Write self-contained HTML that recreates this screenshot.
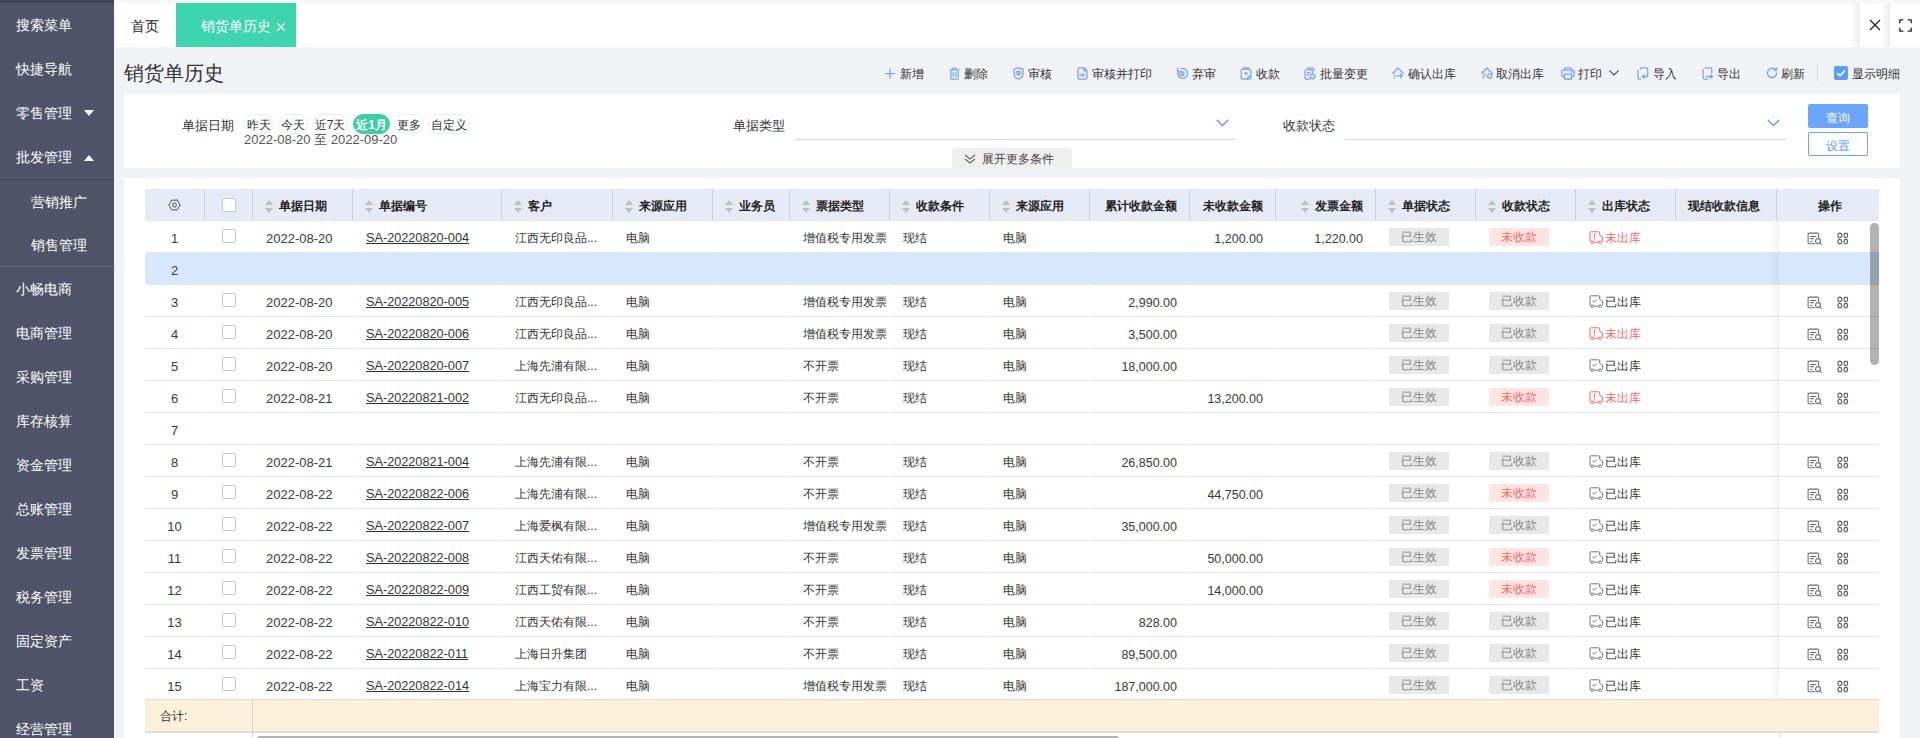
<!DOCTYPE html><html><head><meta charset="utf-8"><title>销货单历史</title><style>
*{box-sizing:border-box;margin:0;padding:0}
html,body{width:1920px;height:738px;overflow:hidden;background:#f0f2f5;font-family:"Liberation Sans",sans-serif;color:#333;font-size:12px}
.abs{position:absolute}
#side{position:absolute;left:0;top:0;width:114px;height:738px;background:#505469;color:#fff}
.mi,.smi,.t,.cell,.hdt{position:absolute;white-space:nowrap;margin-top:1px}
.mi{left:16px;font-size:14px;line-height:16px;color:#fff;font-weight:500}
.smi{left:31px;font-size:14px;line-height:16px;color:#fff;font-weight:500}
.tri{position:absolute;width:0;height:0;border-left:5px solid transparent;border-right:5px solid transparent}
.t{line-height:14px}
.panel{position:absolute;left:124px;width:1776px;background:#fff}
.pill{position:absolute;top:114px;height:20px;border:1px solid #dcf4ec;border-radius:10px;font-size:12px;line-height:20px;text-align:center;color:#333}
.uline{position:absolute;height:1px;background:#d6d6d6}
.vb{position:absolute;width:1px;background:#cdd1da}
.hb{position:absolute;height:1px;background:#e4e4e4}
.cell{font-size:12px;line-height:14px;color:#333;margin-top:0}
.num{margin-top:1px;color:#3a3a3a}
.hdt{font-size:12px;line-height:14px;color:#222;font-weight:bold}
.sort{position:absolute}
.badge{position:absolute;width:60px;height:18px;line-height:18px;text-align:center;font-size:12px}
.bg1{background:#e8e8e8;color:#858585}
.bg2{background:#ffe4e4;color:#f56b5f}
.n13{font-size:13px}
.cb{position:absolute;width:14px;height:14px;border:1px solid #c6c6c6;border-radius:2px;background:#fff}
.lbl{font-size:13px}
</style></head><body>
<div id="side">
<div class="abs" style="left:0;top:0;width:114px;height:3px;background:#41445a"></div>
<div class="mi" style="top:16px">搜索菜单</div>
<div class="mi" style="top:60px">快捷导航</div>
<div class="mi" style="top:104px">零售管理</div>
<div class="mi" style="top:148px">批发管理</div>
<div class="tri" style="left:84px;top:110px;border-top:6px solid #fff"></div>
<div class="tri" style="left:84px;top:155px;border-bottom:6px solid #fff"></div>
<div class="abs" style="left:0;top:179px;width:114px;height:1px;background:#44475a"></div>
<div class="abs" style="left:0;top:266px;width:114px;height:1px;background:#676b7d"></div>
<div class="smi" style="top:193px">营销推广</div>
<div class="smi" style="top:236px">销售管理</div>
<div class="mi" style="top:280px">小畅电商</div>
<div class="mi" style="top:324px">电商管理</div>
<div class="mi" style="top:368px">采购管理</div>
<div class="mi" style="top:412px">库存核算</div>
<div class="mi" style="top:456px">资金管理</div>
<div class="mi" style="top:500px">总账管理</div>
<div class="mi" style="top:544px">发票管理</div>
<div class="mi" style="top:588px">税务管理</div>
<div class="mi" style="top:632px">固定资产</div>
<div class="mi" style="top:676px">工资</div>
<div class="mi" style="top:720px">经营管理</div>
</div>
<div class="abs" style="left:114px;top:0;width:1806px;height:3px;background:#f6f7fb"></div>
<div class="abs" style="left:115px;top:3px;width:1805px;height:44px;background:#fff"></div>
<div class="t" style="left:131px;top:17px;font-size:14px;line-height:16px;color:#222">首页</div>
<div class="abs" style="left:176px;top:3px;width:120px;height:44px;background:#3dd5ae"></div>
<div class="t" style="left:201px;top:17px;font-size:14px;line-height:16px;color:#fff">销货单历史</div>
<svg class="abs" style="left:276px;top:22px" width="10" height="10" viewBox="0 0 10 10"><path d="M1 1L9 9M9 1L1 9" stroke="#fff" stroke-width="1.1"/></svg>
<div class="abs" style="left:1851px;top:3px;width:9px;height:44px;background:linear-gradient(to right,rgba(0,0,0,0),rgba(0,0,0,0.07))"></div>
<div class="abs" style="left:1881px;top:3px;width:9px;height:44px;background:linear-gradient(to right,rgba(0,0,0,0),rgba(0,0,0,0.07))"></div>
<svg class="abs" style="left:1869px;top:19px" width="12" height="12" viewBox="0 0 12 12"><path d="M1 1L11 11M11 1L1 11" stroke="#222" stroke-width="1.3"/></svg>
<svg class="abs" style="left:1899px;top:19px" width="13" height="13" viewBox="0 0 13 13" fill="none" stroke="#222" stroke-width="1.3" stroke-linejoin="round"><path d="M0.8 4.3V0.8H4.3M8.7 0.8H12.2V4.3M12.2 8.7V12.2H8.7M4.3 12.2H0.8V8.7"/></svg>
<div class="t" style="left:124px;top:62px;font-size:20px;line-height:22px;color:#333;margin-top:0">销货单历史</div>
<div class="abs" style="left:884px;top:67px;line-height:0"><svg width="12" height="13" viewBox="0 0 12 13" fill="none" stroke="url(#g1)" stroke-width="1.25" stroke-linecap="round" stroke-linejoin="round"><defs><linearGradient id="g1" x1="0" y1="0" x2="1" y2="1"><stop offset="0" stop-color="#a694f6"/><stop offset="0.45" stop-color="#72a3f8"/><stop offset="1" stop-color="#6aa8f8"/></linearGradient></defs><path d="M6 2V11M1.5 6.5H10.5"/></svg></div>
<div class="t" style="left:900px;top:66px;font-size:12px;line-height:14px;color:#333">新增</div>
<div class="abs" style="left:948.5px;top:67px;line-height:0"><svg width="11" height="13" viewBox="0 0 11 13" fill="none" stroke="url(#g2)" stroke-width="1.25" stroke-linecap="round" stroke-linejoin="round"><defs><linearGradient id="g2" x1="0" y1="0" x2="1" y2="1"><stop offset="0" stop-color="#a694f6"/><stop offset="0.45" stop-color="#72a3f8"/><stop offset="1" stop-color="#6aa8f8"/></linearGradient></defs><path d="M3.8 2.2V1.2H7.2V2.2M1 2.8H10M1.8 3V11C1.8 11.6 2.2 12 2.8 12H8.2C8.8 12 9.2 11.6 9.2 11V3M4.2 5.5V9.5M6.8 5.5V9.5"/></svg></div>
<div class="t" style="left:964px;top:66px;font-size:12px;line-height:14px;color:#333">删除</div>
<div class="abs" style="left:1012.5px;top:67px;line-height:0"><svg width="11" height="13" viewBox="0 0 11 13" fill="none" stroke="url(#g3)" stroke-width="1.25" stroke-linecap="round" stroke-linejoin="round"><defs><linearGradient id="g3" x1="0" y1="0" x2="1" y2="1"><stop offset="0" stop-color="#a694f6"/><stop offset="0.45" stop-color="#72a3f8"/><stop offset="1" stop-color="#6aa8f8"/></linearGradient></defs><path d="M1 2.2L5.5 0.8L10 2.2V6.5C10 9.3 7.8 11.3 5.5 12.2C3.2 11.3 1 9.3 1 6.5Z"/><path d="M3.5 4.5H7.5V7.5H3.5ZM5.5 3.8V9M3.5 6H7.5" stroke-width="0.9"/></svg></div>
<div class="t" style="left:1028px;top:66px;font-size:12px;line-height:14px;color:#333">审核</div>
<div class="abs" style="left:1076.5px;top:67px;line-height:0"><svg width="11" height="13" viewBox="0 0 11 13" fill="none" stroke="url(#g4)" stroke-width="1.25" stroke-linecap="round" stroke-linejoin="round"><defs><linearGradient id="g4" x1="0" y1="0" x2="1" y2="1"><stop offset="0" stop-color="#a694f6"/><stop offset="0.45" stop-color="#72a3f8"/><stop offset="1" stop-color="#6aa8f8"/></linearGradient></defs><path d="M2.2 0.8H7L10 3.8V10.8C10 11.6 9.6 12 8.8 12H2.2C1.4 12 1 11.6 1 10.8V2C1 1.2 1.4 0.8 2.2 0.8ZM7 0.8V3.8H10"/><path d="M2.8 8C3.8 6.4 7.2 6.4 8.2 8C7.2 9.6 3.8 9.6 2.8 8Z M5.5 7.3V8.7" stroke-width="0.9"/></svg></div>
<div class="t" style="left:1092px;top:66px;font-size:12px;line-height:14px;color:#333">审核并打印</div>
<div class="abs" style="left:1176px;top:67px;line-height:0"><svg width="12" height="13" viewBox="0 0 12 13" fill="none" stroke="url(#g5)" stroke-width="1.25" stroke-linecap="round" stroke-linejoin="round"><defs><linearGradient id="g5" x1="0" y1="0" x2="1" y2="1"><stop offset="0" stop-color="#a694f6"/><stop offset="0.45" stop-color="#72a3f8"/><stop offset="1" stop-color="#6aa8f8"/></linearGradient></defs><path d="M2.3 3.8A5 5 0 1 0 5 1.6M1.5 1V4H4.5"/><path d="M4 5H8V8.5H4ZM6 4.3V9.5M4 6.7H8" stroke-width="0.9"/></svg></div>
<div class="t" style="left:1192px;top:66px;font-size:12px;line-height:14px;color:#333">弃审</div>
<div class="abs" style="left:1240px;top:67px;line-height:0"><svg width="12" height="13" viewBox="0 0 12 13" fill="none" stroke="url(#g6)" stroke-width="1.25" stroke-linecap="round" stroke-linejoin="round"><defs><linearGradient id="g6" x1="0" y1="0" x2="1" y2="1"><stop offset="0" stop-color="#a694f6"/><stop offset="0.45" stop-color="#72a3f8"/><stop offset="1" stop-color="#6aa8f8"/></linearGradient></defs><path d="M3 0.8H9M1.2 3.5C1.2 2.8 1.6 2.4 2.3 2.4H9.7C10.4 2.4 10.8 2.8 10.8 3.5V10.8C10.8 11.5 10.4 12 9.7 12H2.3C1.6 12 1.2 11.5 1.2 10.8Z"/><path d="M4 6.3L6 8.3L8 6.3L6 4.8Z" fill="#79a2f8" stroke="none"/><path d="M6.5 12L10.8 8"/></svg></div>
<div class="t" style="left:1256px;top:66px;font-size:12px;line-height:14px;color:#333">收款</div>
<div class="abs" style="left:1304px;top:67px;line-height:0"><svg width="12" height="13" viewBox="0 0 12 13" fill="none" stroke="url(#g7)" stroke-width="1.25" stroke-linecap="round" stroke-linejoin="round"><defs><linearGradient id="g7" x1="0" y1="0" x2="1" y2="1"><stop offset="0" stop-color="#a694f6"/><stop offset="0.45" stop-color="#72a3f8"/><stop offset="1" stop-color="#6aa8f8"/></linearGradient></defs><path d="M3.2 0.8H8.6C9.6 0.8 10 1.2 10 2.2V3.5M1 4C1 3 1.4 2.6 2.4 2.6H7C8 2.6 8.4 3 8.4 4V6M1 4V11C1 11.6 1.4 12 2.2 12H5.5M3 5.5H6M3 7.5H5"/><circle cx="8.5" cy="9.5" r="2.3"/></svg></div>
<div class="t" style="left:1320px;top:66px;font-size:12px;line-height:14px;color:#333">批量变更</div>
<div class="abs" style="left:1392px;top:67px;line-height:0"><svg width="12" height="12" viewBox="0 0 12 12" fill="none" stroke="url(#g8)" stroke-width="1.25" stroke-linecap="round" stroke-linejoin="round"><defs><linearGradient id="g8" x1="0" y1="0" x2="1" y2="1"><stop offset="0" stop-color="#a694f6"/><stop offset="0.45" stop-color="#72a3f8"/><stop offset="1" stop-color="#6aa8f8"/></linearGradient></defs><path d="M0.8 6.2L6 1L11.2 6.2M2.2 5V6.3M2.2 8V8.6M2.2 10.2V11M4.2 8.8H10.2M8.5 7L10.3 8.8L8.5 10.6"/></svg></div>
<div class="t" style="left:1408px;top:66px;font-size:12px;line-height:14px;color:#333">确认出库</div>
<div class="abs" style="left:1480.5px;top:67px;line-height:0"><svg width="12" height="12" viewBox="0 0 12 12" fill="none" stroke="url(#g9)" stroke-width="1.25" stroke-linecap="round" stroke-linejoin="round"><defs><linearGradient id="g9" x1="0" y1="0" x2="1" y2="1"><stop offset="0" stop-color="#a694f6"/><stop offset="0.45" stop-color="#72a3f8"/><stop offset="1" stop-color="#6aa8f8"/></linearGradient></defs><path d="M0.8 6.2L6 1L11.2 6.2M2.2 5V6.3M2.2 8V8.6M2.2 10.2V11M4.2 6.5V7.2M4.2 9V9.7"/><circle cx="8.8" cy="9" r="2.2"/><path d="M7.8 9H9.8" stroke-width="0.9"/></svg></div>
<div class="t" style="left:1496px;top:66px;font-size:12px;line-height:14px;color:#333">取消出库</div>
<div class="abs" style="left:1560.5px;top:67px;line-height:0"><svg width="14" height="13" viewBox="0 0 14 13" fill="none" stroke="url(#g10)" stroke-width="1.3" stroke-linecap="round" stroke-linejoin="round"><defs><linearGradient id="g10" x1="0" y1="0" x2="1" y2="1"><stop offset="0" stop-color="#a694f6"/><stop offset="0.45" stop-color="#72a3f8"/><stop offset="1" stop-color="#6aa8f8"/></linearGradient></defs><path d="M3.5 3.2V1.8C3.5 1.2 3.9 0.8 4.5 0.8H9.5C10.1 0.8 10.5 1.2 10.5 1.8V3.2M3 9.5H1.8C1.2 9.5 0.8 9.1 0.8 8.5V4.3C0.8 3.7 1.2 3.2 1.8 3.2H12.2C12.8 3.2 13.2 3.7 13.2 4.3V8.5C13.2 9.1 12.8 9.5 12.2 9.5H11M3.5 7.2H10.5V12H3.5ZM10.5 5H11.2"/></svg></div>
<div class="t" style="left:1578px;top:66px;font-size:12px;line-height:14px;color:#333">打印</div>
<div class="abs" style="left:1637px;top:67px;line-height:0"><svg width="12" height="13" viewBox="0 0 12 13" fill="none" stroke="url(#g11)" stroke-width="1.25" stroke-linecap="round" stroke-linejoin="round"><defs><linearGradient id="g11" x1="0" y1="0" x2="1" y2="1"><stop offset="0" stop-color="#a694f6"/><stop offset="0.45" stop-color="#72a3f8"/><stop offset="1" stop-color="#6aa8f8"/></linearGradient></defs><path d="M3.2 2.2C3.2 1.2 3.6 0.8 4.6 0.8H9.3C10.3 0.8 10.7 1.2 10.7 2.2V8.8M1 3.2V10.8C1 11.6 1.4 12 2.2 12H4M10.5 9.5H5.5M7.3 7.7L5.5 9.5L7.3 11.3"/></svg></div>
<div class="t" style="left:1653px;top:66px;font-size:12px;line-height:14px;color:#333">导入</div>
<div class="abs" style="left:1701.5px;top:67px;line-height:0"><svg width="12" height="13" viewBox="0 0 12 13" fill="none" stroke="url(#g12)" stroke-width="1.25" stroke-linecap="round" stroke-linejoin="round"><defs><linearGradient id="g12" x1="0" y1="0" x2="1" y2="1"><stop offset="0" stop-color="#a694f6"/><stop offset="0.45" stop-color="#72a3f8"/><stop offset="1" stop-color="#6aa8f8"/></linearGradient></defs><path d="M3 0.8H8.4C9.4 0.8 9.8 1.2 9.8 2.2V5.5M1.2 2.6V10.8C1.2 11.6 1.6 12 2.4 12H5.5M4.5 9.5H10.5M8.7 7.7L10.5 9.5L8.7 11.3"/></svg></div>
<div class="t" style="left:1717px;top:66px;font-size:12px;line-height:14px;color:#333">导出</div>
<div class="abs" style="left:1765.5px;top:67px;line-height:0"><svg width="12" height="12" viewBox="0 0 12 12" fill="none" stroke="url(#g13)" stroke-width="1.4" stroke-linecap="round" stroke-linejoin="round"><defs><linearGradient id="g13" x1="0" y1="0" x2="1" y2="1"><stop offset="0" stop-color="#a694f6"/><stop offset="0.45" stop-color="#72a3f8"/><stop offset="1" stop-color="#6aa8f8"/></linearGradient></defs><path d="M10.6 6.2A4.6 4.6 0 1 1 9 2.4"/><path d="M10.8 0.8V3.4H8.2Z" fill="#72a3f8" stroke-width="0.8"/></svg></div>
<div class="t" style="left:1781px;top:66px;font-size:12px;line-height:14px;color:#333">刷新</div>
<svg class="abs" style="left:1609px;top:70px" width="10" height="6" viewBox="0 0 10 6"><path d="M0.5 0.5L5 5L9.5 0.5" fill="none" stroke="#555" stroke-width="1.1"/></svg>
<div class="abs" style="left:1817px;top:63px;width:1px;height:20px;background:#dcdcdc"></div>
<div class="abs" style="left:1834px;top:66px;width:14px;height:14px;border-radius:2px;background:#5e9df6"></div>
<svg class="abs" style="left:1834px;top:66px" width="14" height="14" viewBox="0 0 14 14"><path d="M3.2 7.1L6 9.7L10.9 4.6" fill="none" stroke="#fff" stroke-width="1.6"/></svg>
<div class="t" style="left:1852px;top:66px;font-size:12px;line-height:14px;color:#333">显示明细</div>
<div class="panel" style="top:94px;height:74px"></div>
<div class="t lbl" style="left:182px;top:118px">单据日期</div>
<div class="pill" style="left:244px;width:30px">昨天</div>
<div class="pill" style="left:278px;width:30px">今天</div>
<div class="pill" style="left:312px;width:36px">近7天</div>
<div class="pill" style="left:353px;width:37px;background:#3ccfa6;border-color:#3ccfa6;color:#fff;font-weight:bold">近1月</div>
<div class="pill" style="left:394px;width:30px">更多</div>
<div class="pill" style="left:428px;width:42px">自定义</div>
<div class="t n13" style="left:244px;top:132px;color:#555">2022-08-20 至 2022-09-20</div>
<div class="t lbl" style="left:733px;top:118px">单据类型</div>
<div class="uline" style="left:795px;top:139px;width:440px"></div>
<svg class="abs" style="left:1216px;top:118.5px" width="13" height="8" viewBox="0 0 13 8"><path d="M0.7 0.7L6.5 6.5L12.3 0.7" fill="none" stroke="#5b9cf6" stroke-width="1.3"/></svg>
<div class="t lbl" style="left:1283px;top:118px">收款状态</div>
<div class="uline" style="left:1345px;top:139px;width:441px"></div>
<svg class="abs" style="left:1767px;top:118.5px" width="13" height="8" viewBox="0 0 13 8"><path d="M0.7 0.7L6.5 6.5L12.3 0.7" fill="none" stroke="#5b9cf6" stroke-width="1.3"/></svg>
<div class="abs" style="left:1808px;top:104px;width:60px;height:24px;background:#6aa5f7;border-radius:2px"></div>
<div class="t" style="left:1826px;top:110px;color:#fff">查询</div>
<div class="abs" style="left:1808px;top:132px;width:60px;height:24px;background:#fff;border:1px solid #6aa5f7;border-radius:2px"></div>
<div class="t" style="left:1826px;top:138px;color:#5b9cf6">设置</div>
<div class="abs" style="left:952px;top:148px;width:120px;height:20px;background:#efefef;border-radius:4px 4px 0 0"></div>
<svg class="abs" style="left:964px;top:153.5px" width="12" height="10" viewBox="0 0 12 10"><path d="M1 1L6 5L11 1M1 5L6 9L11 5" fill="none" stroke="#666" stroke-width="1.1"/></svg>
<div class="t" style="left:982px;top:151px;color:#444">展开更多条件</div>
<div class="panel" style="top:178px;height:560px"></div>
<div class="abs" style="left:145px;top:189px;width:1734px;height:32px;background:#e6eaf4"></div>
<svg class="sort" style="left:265px;top:200px" width="8" height="13" viewBox="0 0 8 13"><path d="M4 0L8 5H0Z M0 8H8L4 13Z" fill="#bfbfbf"/></svg>
<div class="hdt" style="left:279px;top:198px">单据日期</div>
<svg class="sort" style="left:365px;top:200px" width="8" height="13" viewBox="0 0 8 13"><path d="M4 0L8 5H0Z M0 8H8L4 13Z" fill="#bfbfbf"/></svg>
<div class="hdt" style="left:379px;top:198px">单据编号</div>
<svg class="sort" style="left:514px;top:200px" width="8" height="13" viewBox="0 0 8 13"><path d="M4 0L8 5H0Z M0 8H8L4 13Z" fill="#bfbfbf"/></svg>
<div class="hdt" style="left:528px;top:198px">客户</div>
<svg class="sort" style="left:625px;top:200px" width="8" height="13" viewBox="0 0 8 13"><path d="M4 0L8 5H0Z M0 8H8L4 13Z" fill="#bfbfbf"/></svg>
<div class="hdt" style="left:639px;top:198px">来源应用</div>
<svg class="sort" style="left:725px;top:200px" width="8" height="13" viewBox="0 0 8 13"><path d="M4 0L8 5H0Z M0 8H8L4 13Z" fill="#bfbfbf"/></svg>
<div class="hdt" style="left:739px;top:198px">业务员</div>
<svg class="sort" style="left:802px;top:200px" width="8" height="13" viewBox="0 0 8 13"><path d="M4 0L8 5H0Z M0 8H8L4 13Z" fill="#bfbfbf"/></svg>
<div class="hdt" style="left:816px;top:198px">票据类型</div>
<svg class="sort" style="left:902px;top:200px" width="8" height="13" viewBox="0 0 8 13"><path d="M4 0L8 5H0Z M0 8H8L4 13Z" fill="#bfbfbf"/></svg>
<div class="hdt" style="left:916px;top:198px">收款条件</div>
<svg class="sort" style="left:1002px;top:200px" width="8" height="13" viewBox="0 0 8 13"><path d="M4 0L8 5H0Z M0 8H8L4 13Z" fill="#bfbfbf"/></svg>
<div class="hdt" style="left:1016px;top:198px">来源应用</div>
<svg class="sort" style="left:1388px;top:200px" width="8" height="13" viewBox="0 0 8 13"><path d="M4 0L8 5H0Z M0 8H8L4 13Z" fill="#bfbfbf"/></svg>
<div class="hdt" style="left:1402px;top:198px">单据状态</div>
<svg class="sort" style="left:1488px;top:200px" width="8" height="13" viewBox="0 0 8 13"><path d="M4 0L8 5H0Z M0 8H8L4 13Z" fill="#bfbfbf"/></svg>
<div class="hdt" style="left:1502px;top:198px">收款状态</div>
<svg class="sort" style="left:1588px;top:200px" width="8" height="13" viewBox="0 0 8 13"><path d="M4 0L8 5H0Z M0 8H8L4 13Z" fill="#bfbfbf"/></svg>
<div class="hdt" style="left:1602px;top:198px">出库状态</div>
<div class="hdt" style="left:1105px;top:198px">累计收款金额</div>
<div class="hdt" style="left:1203px;top:198px">未收款金额</div>
<svg class="sort" style="left:1301px;top:200px" width="8" height="13" viewBox="0 0 8 13"><path d="M4 0L8 5H0Z M0 8H8L4 13Z" fill="#bfbfbf"/></svg>
<div class="hdt" style="left:1315px;top:198px">发票金额</div>
<div class="hdt" style="left:1688px;top:198px">现结收款信息</div>
<div class="hdt" style="left:1818px;top:198px">操作</div>
<svg class="abs" style="left:168px;top:199.2px" width="13" height="12" viewBox="0 0 13 12" fill="none" stroke="#4a4a4a" stroke-width="1"><path d="M10.48 3.70Q13.70 6.00 10.48 8.30Q10.10 12.24 6.50 10.60Q2.90 12.24 2.52 8.30Q-0.70 6.00 2.52 3.70Q2.90 -0.24 6.50 1.40Q10.10 -0.24 10.48 3.70Z"/><ellipse cx="6.5" cy="6" rx="1.8" ry="2.2"/></svg>
<div class="cb" style="left:222px;top:198px"></div>
<div class="vb" style="left:204px;top:189px;height:32px"></div>
<div class="vb" style="left:252px;top:189px;height:32px"></div>
<div class="vb" style="left:352px;top:189px;height:32px"></div>
<div class="vb" style="left:501px;top:189px;height:32px"></div>
<div class="vb" style="left:612px;top:189px;height:32px"></div>
<div class="vb" style="left:712px;top:189px;height:32px"></div>
<div class="vb" style="left:789px;top:189px;height:32px"></div>
<div class="vb" style="left:889px;top:189px;height:32px"></div>
<div class="vb" style="left:989px;top:189px;height:32px"></div>
<div class="vb" style="left:1089px;top:189px;height:32px"></div>
<div class="vb" style="left:1189px;top:189px;height:32px"></div>
<div class="vb" style="left:1275px;top:189px;height:32px"></div>
<div class="vb" style="left:1375px;top:189px;height:32px"></div>
<div class="vb" style="left:1475px;top:189px;height:32px"></div>
<div class="vb" style="left:1575px;top:189px;height:32px"></div>
<div class="vb" style="left:1675px;top:189px;height:32px"></div>
<div class="vb" style="left:1776px;top:189px;height:32px"></div>
<div class="hb" style="left:146px;top:252px;width:58px"></div>
<div class="hb" style="left:205px;top:252px;width:47px"></div>
<div class="hb" style="left:253px;top:252px;width:99px"></div>
<div class="hb" style="left:353px;top:252px;width:148px"></div>
<div class="hb" style="left:502px;top:252px;width:110px"></div>
<div class="hb" style="left:613px;top:252px;width:99px"></div>
<div class="hb" style="left:713px;top:252px;width:76px"></div>
<div class="hb" style="left:790px;top:252px;width:99px"></div>
<div class="hb" style="left:890px;top:252px;width:99px"></div>
<div class="hb" style="left:990px;top:252px;width:99px"></div>
<div class="hb" style="left:1090px;top:252px;width:99px"></div>
<div class="hb" style="left:1190px;top:252px;width:85px"></div>
<div class="hb" style="left:1276px;top:252px;width:99px"></div>
<div class="hb" style="left:1376px;top:252px;width:99px"></div>
<div class="hb" style="left:1476px;top:252px;width:99px"></div>
<div class="hb" style="left:1576px;top:252px;width:99px"></div>
<div class="hb" style="left:1676px;top:252px;width:100px"></div>
<div class="hb" style="left:1777px;top:252px;width:102px"></div>
<div class="cell n13 num" style="left:145px;width:59px;text-align:center;top:231px">1</div>
<div class="cb" style="left:222px;top:229px"></div>
<div class="cell n13 num" style="left:266px;top:231px">2022-08-20</div>
<div class="cell" style="left:366px;top:231px;text-decoration:underline;font-size:12.7px">SA-20220820-004</div>
<div class="cell" style="left:515px;top:231px">江西无印良品...</div>
<div class="cell" style="left:626px;top:231px">电脑</div>
<div class="cell" style="left:803px;top:231px">增值税专用发票</div>
<div class="cell" style="left:903px;top:231px">现结</div>
<div class="cell" style="left:1003px;top:231px">电脑</div>
<div class="cell num" style="right:657px;top:231px;font-size:12.5px">1,200.00</div>
<div class="cell num" style="right:557px;top:231px;font-size:12.5px">1,220.00</div>
<div class="badge bg1" style="left:1389px;top:228px">已生效</div>
<div class="badge bg2" style="left:1489px;top:228px">未收款</div>
<div class="abs" style="left:1589px;top:230.5px;line-height:0"><svg width="16" height="14" viewBox="0 0 16 14" fill="none" stroke="#f7695c" stroke-width="1" stroke-linejoin="round"><path d="M1 10.5V1.8C1 1.2 1.3 0.8 2 0.8H9.8C10.4 0.8 10.7 1.2 10.7 1.8V4.2L13.6 6.2V10.5M4.8 11.2H9.6M5.6 3V7M5.6 8.2V9"/><circle cx="3.2" cy="11.2" r="1.35"/><circle cx="11.2" cy="11.2" r="1.35"/></svg></div>
<div class="cell" style="left:1605px;top:231px;color:#f7695c">未出库</div>
<div class="abs" style="left:1807px;top:232px;line-height:0"><svg width="16" height="14" viewBox="0 0 16 14" fill="none" stroke="#6e6e6e" stroke-width="1.05" stroke-linecap="round"><path d="M7.6 11.8H2.2C1.6 11.8 1.1 11.3 1.1 10.7V2.2C1.1 1.6 1.6 1.1 2.2 1.1H10.6C11.2 1.1 11.7 1.6 11.7 2.2V5.6M3.6 4.5H9M3.6 6.6H6.4M3.6 9.4H5"/><circle cx="11" cy="9.1" r="2.5"/><path d="M12.9 11L14.4 12.6"/></svg></div>
<div class="abs" style="left:1837px;top:232px;line-height:0"><svg width="12" height="13" viewBox="0 0 12 13" fill="none" stroke="#5c5c5c" stroke-width="1.2"><rect x="1" y="1.2" width="3.6" height="4.4" rx="1.8"/><rect x="7" y="1.2" width="3.6" height="4.4" rx="1.8"/><rect x="1" y="7.4" width="3.6" height="4.4" rx="1.8"/><rect x="7" y="7.4" width="3.6" height="4.4" rx="1.8"/></svg></div>
<div class="abs" style="left:145px;top:253px;width:1734px;height:31px;background:#d7e7fc"></div>
<div class="hb" style="left:146px;top:284px;width:58px"></div>
<div class="hb" style="left:205px;top:284px;width:47px"></div>
<div class="hb" style="left:253px;top:284px;width:99px"></div>
<div class="hb" style="left:353px;top:284px;width:148px"></div>
<div class="hb" style="left:502px;top:284px;width:110px"></div>
<div class="hb" style="left:613px;top:284px;width:99px"></div>
<div class="hb" style="left:713px;top:284px;width:76px"></div>
<div class="hb" style="left:790px;top:284px;width:99px"></div>
<div class="hb" style="left:890px;top:284px;width:99px"></div>
<div class="hb" style="left:990px;top:284px;width:99px"></div>
<div class="hb" style="left:1090px;top:284px;width:99px"></div>
<div class="hb" style="left:1190px;top:284px;width:85px"></div>
<div class="hb" style="left:1276px;top:284px;width:99px"></div>
<div class="hb" style="left:1376px;top:284px;width:99px"></div>
<div class="hb" style="left:1476px;top:284px;width:99px"></div>
<div class="hb" style="left:1576px;top:284px;width:99px"></div>
<div class="hb" style="left:1676px;top:284px;width:100px"></div>
<div class="hb" style="left:1777px;top:284px;width:102px"></div>
<div class="cell n13 num" style="left:145px;width:59px;text-align:center;top:263px">2</div>
<div class="hb" style="left:146px;top:316px;width:58px"></div>
<div class="hb" style="left:205px;top:316px;width:47px"></div>
<div class="hb" style="left:253px;top:316px;width:99px"></div>
<div class="hb" style="left:353px;top:316px;width:148px"></div>
<div class="hb" style="left:502px;top:316px;width:110px"></div>
<div class="hb" style="left:613px;top:316px;width:99px"></div>
<div class="hb" style="left:713px;top:316px;width:76px"></div>
<div class="hb" style="left:790px;top:316px;width:99px"></div>
<div class="hb" style="left:890px;top:316px;width:99px"></div>
<div class="hb" style="left:990px;top:316px;width:99px"></div>
<div class="hb" style="left:1090px;top:316px;width:99px"></div>
<div class="hb" style="left:1190px;top:316px;width:85px"></div>
<div class="hb" style="left:1276px;top:316px;width:99px"></div>
<div class="hb" style="left:1376px;top:316px;width:99px"></div>
<div class="hb" style="left:1476px;top:316px;width:99px"></div>
<div class="hb" style="left:1576px;top:316px;width:99px"></div>
<div class="hb" style="left:1676px;top:316px;width:100px"></div>
<div class="hb" style="left:1777px;top:316px;width:102px"></div>
<div class="cell n13 num" style="left:145px;width:59px;text-align:center;top:295px">3</div>
<div class="cb" style="left:222px;top:293px"></div>
<div class="cell n13 num" style="left:266px;top:295px">2022-08-20</div>
<div class="cell" style="left:366px;top:295px;text-decoration:underline;font-size:12.7px">SA-20220820-005</div>
<div class="cell" style="left:515px;top:295px">江西无印良品...</div>
<div class="cell" style="left:626px;top:295px">电脑</div>
<div class="cell" style="left:803px;top:295px">增值税专用发票</div>
<div class="cell" style="left:903px;top:295px">现结</div>
<div class="cell" style="left:1003px;top:295px">电脑</div>
<div class="cell num" style="right:743px;top:295px;font-size:12.5px">2,990.00</div>
<div class="badge bg1" style="left:1389px;top:292px">已生效</div>
<div class="badge bg1" style="left:1489px;top:292px">已收款</div>
<div class="abs" style="left:1589px;top:294.5px;line-height:0"><svg width="16" height="14" viewBox="0 0 16 14" fill="none" stroke="#777" stroke-width="1" stroke-linejoin="round"><path d="M1 10.5V1.8C1 1.2 1.3 0.8 2 0.8H9.8C10.4 0.8 10.7 1.2 10.7 1.8V4.2L13.6 6.2V10.5M4.8 11.2H9.6M3.6 5.6L5.2 7.2L7.6 4.6"/><circle cx="3.2" cy="11.2" r="1.35"/><circle cx="11.2" cy="11.2" r="1.35"/></svg></div>
<div class="cell" style="left:1605px;top:295px;color:#333">已出库</div>
<div class="abs" style="left:1807px;top:296px;line-height:0"><svg width="16" height="14" viewBox="0 0 16 14" fill="none" stroke="#6e6e6e" stroke-width="1.05" stroke-linecap="round"><path d="M7.6 11.8H2.2C1.6 11.8 1.1 11.3 1.1 10.7V2.2C1.1 1.6 1.6 1.1 2.2 1.1H10.6C11.2 1.1 11.7 1.6 11.7 2.2V5.6M3.6 4.5H9M3.6 6.6H6.4M3.6 9.4H5"/><circle cx="11" cy="9.1" r="2.5"/><path d="M12.9 11L14.4 12.6"/></svg></div>
<div class="abs" style="left:1837px;top:296px;line-height:0"><svg width="12" height="13" viewBox="0 0 12 13" fill="none" stroke="#5c5c5c" stroke-width="1.2"><rect x="1" y="1.2" width="3.6" height="4.4" rx="1.8"/><rect x="7" y="1.2" width="3.6" height="4.4" rx="1.8"/><rect x="1" y="7.4" width="3.6" height="4.4" rx="1.8"/><rect x="7" y="7.4" width="3.6" height="4.4" rx="1.8"/></svg></div>
<div class="hb" style="left:146px;top:348px;width:58px"></div>
<div class="hb" style="left:205px;top:348px;width:47px"></div>
<div class="hb" style="left:253px;top:348px;width:99px"></div>
<div class="hb" style="left:353px;top:348px;width:148px"></div>
<div class="hb" style="left:502px;top:348px;width:110px"></div>
<div class="hb" style="left:613px;top:348px;width:99px"></div>
<div class="hb" style="left:713px;top:348px;width:76px"></div>
<div class="hb" style="left:790px;top:348px;width:99px"></div>
<div class="hb" style="left:890px;top:348px;width:99px"></div>
<div class="hb" style="left:990px;top:348px;width:99px"></div>
<div class="hb" style="left:1090px;top:348px;width:99px"></div>
<div class="hb" style="left:1190px;top:348px;width:85px"></div>
<div class="hb" style="left:1276px;top:348px;width:99px"></div>
<div class="hb" style="left:1376px;top:348px;width:99px"></div>
<div class="hb" style="left:1476px;top:348px;width:99px"></div>
<div class="hb" style="left:1576px;top:348px;width:99px"></div>
<div class="hb" style="left:1676px;top:348px;width:100px"></div>
<div class="hb" style="left:1777px;top:348px;width:102px"></div>
<div class="cell n13 num" style="left:145px;width:59px;text-align:center;top:327px">4</div>
<div class="cb" style="left:222px;top:325px"></div>
<div class="cell n13 num" style="left:266px;top:327px">2022-08-20</div>
<div class="cell" style="left:366px;top:327px;text-decoration:underline;font-size:12.7px">SA-20220820-006</div>
<div class="cell" style="left:515px;top:327px">江西无印良品...</div>
<div class="cell" style="left:626px;top:327px">电脑</div>
<div class="cell" style="left:803px;top:327px">增值税专用发票</div>
<div class="cell" style="left:903px;top:327px">现结</div>
<div class="cell" style="left:1003px;top:327px">电脑</div>
<div class="cell num" style="right:743px;top:327px;font-size:12.5px">3,500.00</div>
<div class="badge bg1" style="left:1389px;top:324px">已生效</div>
<div class="badge bg1" style="left:1489px;top:324px">已收款</div>
<div class="abs" style="left:1589px;top:326.5px;line-height:0"><svg width="16" height="14" viewBox="0 0 16 14" fill="none" stroke="#f7695c" stroke-width="1" stroke-linejoin="round"><path d="M1 10.5V1.8C1 1.2 1.3 0.8 2 0.8H9.8C10.4 0.8 10.7 1.2 10.7 1.8V4.2L13.6 6.2V10.5M4.8 11.2H9.6M5.6 3V7M5.6 8.2V9"/><circle cx="3.2" cy="11.2" r="1.35"/><circle cx="11.2" cy="11.2" r="1.35"/></svg></div>
<div class="cell" style="left:1605px;top:327px;color:#f7695c">未出库</div>
<div class="abs" style="left:1807px;top:328px;line-height:0"><svg width="16" height="14" viewBox="0 0 16 14" fill="none" stroke="#6e6e6e" stroke-width="1.05" stroke-linecap="round"><path d="M7.6 11.8H2.2C1.6 11.8 1.1 11.3 1.1 10.7V2.2C1.1 1.6 1.6 1.1 2.2 1.1H10.6C11.2 1.1 11.7 1.6 11.7 2.2V5.6M3.6 4.5H9M3.6 6.6H6.4M3.6 9.4H5"/><circle cx="11" cy="9.1" r="2.5"/><path d="M12.9 11L14.4 12.6"/></svg></div>
<div class="abs" style="left:1837px;top:328px;line-height:0"><svg width="12" height="13" viewBox="0 0 12 13" fill="none" stroke="#5c5c5c" stroke-width="1.2"><rect x="1" y="1.2" width="3.6" height="4.4" rx="1.8"/><rect x="7" y="1.2" width="3.6" height="4.4" rx="1.8"/><rect x="1" y="7.4" width="3.6" height="4.4" rx="1.8"/><rect x="7" y="7.4" width="3.6" height="4.4" rx="1.8"/></svg></div>
<div class="hb" style="left:146px;top:380px;width:58px"></div>
<div class="hb" style="left:205px;top:380px;width:47px"></div>
<div class="hb" style="left:253px;top:380px;width:99px"></div>
<div class="hb" style="left:353px;top:380px;width:148px"></div>
<div class="hb" style="left:502px;top:380px;width:110px"></div>
<div class="hb" style="left:613px;top:380px;width:99px"></div>
<div class="hb" style="left:713px;top:380px;width:76px"></div>
<div class="hb" style="left:790px;top:380px;width:99px"></div>
<div class="hb" style="left:890px;top:380px;width:99px"></div>
<div class="hb" style="left:990px;top:380px;width:99px"></div>
<div class="hb" style="left:1090px;top:380px;width:99px"></div>
<div class="hb" style="left:1190px;top:380px;width:85px"></div>
<div class="hb" style="left:1276px;top:380px;width:99px"></div>
<div class="hb" style="left:1376px;top:380px;width:99px"></div>
<div class="hb" style="left:1476px;top:380px;width:99px"></div>
<div class="hb" style="left:1576px;top:380px;width:99px"></div>
<div class="hb" style="left:1676px;top:380px;width:100px"></div>
<div class="hb" style="left:1777px;top:380px;width:102px"></div>
<div class="cell n13 num" style="left:145px;width:59px;text-align:center;top:359px">5</div>
<div class="cb" style="left:222px;top:357px"></div>
<div class="cell n13 num" style="left:266px;top:359px">2022-08-20</div>
<div class="cell" style="left:366px;top:359px;text-decoration:underline;font-size:12.7px">SA-20220820-007</div>
<div class="cell" style="left:515px;top:359px">上海先浦有限...</div>
<div class="cell" style="left:626px;top:359px">电脑</div>
<div class="cell" style="left:803px;top:359px">不开票</div>
<div class="cell" style="left:903px;top:359px">现结</div>
<div class="cell" style="left:1003px;top:359px">电脑</div>
<div class="cell num" style="right:743px;top:359px;font-size:12.5px">18,000.00</div>
<div class="badge bg1" style="left:1389px;top:356px">已生效</div>
<div class="badge bg1" style="left:1489px;top:356px">已收款</div>
<div class="abs" style="left:1589px;top:358.5px;line-height:0"><svg width="16" height="14" viewBox="0 0 16 14" fill="none" stroke="#777" stroke-width="1" stroke-linejoin="round"><path d="M1 10.5V1.8C1 1.2 1.3 0.8 2 0.8H9.8C10.4 0.8 10.7 1.2 10.7 1.8V4.2L13.6 6.2V10.5M4.8 11.2H9.6M3.6 5.6L5.2 7.2L7.6 4.6"/><circle cx="3.2" cy="11.2" r="1.35"/><circle cx="11.2" cy="11.2" r="1.35"/></svg></div>
<div class="cell" style="left:1605px;top:359px;color:#333">已出库</div>
<div class="abs" style="left:1807px;top:360px;line-height:0"><svg width="16" height="14" viewBox="0 0 16 14" fill="none" stroke="#6e6e6e" stroke-width="1.05" stroke-linecap="round"><path d="M7.6 11.8H2.2C1.6 11.8 1.1 11.3 1.1 10.7V2.2C1.1 1.6 1.6 1.1 2.2 1.1H10.6C11.2 1.1 11.7 1.6 11.7 2.2V5.6M3.6 4.5H9M3.6 6.6H6.4M3.6 9.4H5"/><circle cx="11" cy="9.1" r="2.5"/><path d="M12.9 11L14.4 12.6"/></svg></div>
<div class="abs" style="left:1837px;top:360px;line-height:0"><svg width="12" height="13" viewBox="0 0 12 13" fill="none" stroke="#5c5c5c" stroke-width="1.2"><rect x="1" y="1.2" width="3.6" height="4.4" rx="1.8"/><rect x="7" y="1.2" width="3.6" height="4.4" rx="1.8"/><rect x="1" y="7.4" width="3.6" height="4.4" rx="1.8"/><rect x="7" y="7.4" width="3.6" height="4.4" rx="1.8"/></svg></div>
<div class="hb" style="left:146px;top:412px;width:58px"></div>
<div class="hb" style="left:205px;top:412px;width:47px"></div>
<div class="hb" style="left:253px;top:412px;width:99px"></div>
<div class="hb" style="left:353px;top:412px;width:148px"></div>
<div class="hb" style="left:502px;top:412px;width:110px"></div>
<div class="hb" style="left:613px;top:412px;width:99px"></div>
<div class="hb" style="left:713px;top:412px;width:76px"></div>
<div class="hb" style="left:790px;top:412px;width:99px"></div>
<div class="hb" style="left:890px;top:412px;width:99px"></div>
<div class="hb" style="left:990px;top:412px;width:99px"></div>
<div class="hb" style="left:1090px;top:412px;width:99px"></div>
<div class="hb" style="left:1190px;top:412px;width:85px"></div>
<div class="hb" style="left:1276px;top:412px;width:99px"></div>
<div class="hb" style="left:1376px;top:412px;width:99px"></div>
<div class="hb" style="left:1476px;top:412px;width:99px"></div>
<div class="hb" style="left:1576px;top:412px;width:99px"></div>
<div class="hb" style="left:1676px;top:412px;width:100px"></div>
<div class="hb" style="left:1777px;top:412px;width:102px"></div>
<div class="cell n13 num" style="left:145px;width:59px;text-align:center;top:391px">6</div>
<div class="cb" style="left:222px;top:389px"></div>
<div class="cell n13 num" style="left:266px;top:391px">2022-08-21</div>
<div class="cell" style="left:366px;top:391px;text-decoration:underline;font-size:12.7px">SA-20220821-002</div>
<div class="cell" style="left:515px;top:391px">江西无印良品...</div>
<div class="cell" style="left:626px;top:391px">电脑</div>
<div class="cell" style="left:803px;top:391px">不开票</div>
<div class="cell" style="left:903px;top:391px">现结</div>
<div class="cell" style="left:1003px;top:391px">电脑</div>
<div class="cell num" style="right:657px;top:391px;font-size:12.5px">13,200.00</div>
<div class="badge bg1" style="left:1389px;top:388px">已生效</div>
<div class="badge bg2" style="left:1489px;top:388px">未收款</div>
<div class="abs" style="left:1589px;top:390.5px;line-height:0"><svg width="16" height="14" viewBox="0 0 16 14" fill="none" stroke="#f7695c" stroke-width="1" stroke-linejoin="round"><path d="M1 10.5V1.8C1 1.2 1.3 0.8 2 0.8H9.8C10.4 0.8 10.7 1.2 10.7 1.8V4.2L13.6 6.2V10.5M4.8 11.2H9.6M5.6 3V7M5.6 8.2V9"/><circle cx="3.2" cy="11.2" r="1.35"/><circle cx="11.2" cy="11.2" r="1.35"/></svg></div>
<div class="cell" style="left:1605px;top:391px;color:#f7695c">未出库</div>
<div class="abs" style="left:1807px;top:392px;line-height:0"><svg width="16" height="14" viewBox="0 0 16 14" fill="none" stroke="#6e6e6e" stroke-width="1.05" stroke-linecap="round"><path d="M7.6 11.8H2.2C1.6 11.8 1.1 11.3 1.1 10.7V2.2C1.1 1.6 1.6 1.1 2.2 1.1H10.6C11.2 1.1 11.7 1.6 11.7 2.2V5.6M3.6 4.5H9M3.6 6.6H6.4M3.6 9.4H5"/><circle cx="11" cy="9.1" r="2.5"/><path d="M12.9 11L14.4 12.6"/></svg></div>
<div class="abs" style="left:1837px;top:392px;line-height:0"><svg width="12" height="13" viewBox="0 0 12 13" fill="none" stroke="#5c5c5c" stroke-width="1.2"><rect x="1" y="1.2" width="3.6" height="4.4" rx="1.8"/><rect x="7" y="1.2" width="3.6" height="4.4" rx="1.8"/><rect x="1" y="7.4" width="3.6" height="4.4" rx="1.8"/><rect x="7" y="7.4" width="3.6" height="4.4" rx="1.8"/></svg></div>
<div class="hb" style="left:146px;top:444px;width:58px"></div>
<div class="hb" style="left:205px;top:444px;width:47px"></div>
<div class="hb" style="left:253px;top:444px;width:99px"></div>
<div class="hb" style="left:353px;top:444px;width:148px"></div>
<div class="hb" style="left:502px;top:444px;width:110px"></div>
<div class="hb" style="left:613px;top:444px;width:99px"></div>
<div class="hb" style="left:713px;top:444px;width:76px"></div>
<div class="hb" style="left:790px;top:444px;width:99px"></div>
<div class="hb" style="left:890px;top:444px;width:99px"></div>
<div class="hb" style="left:990px;top:444px;width:99px"></div>
<div class="hb" style="left:1090px;top:444px;width:99px"></div>
<div class="hb" style="left:1190px;top:444px;width:85px"></div>
<div class="hb" style="left:1276px;top:444px;width:99px"></div>
<div class="hb" style="left:1376px;top:444px;width:99px"></div>
<div class="hb" style="left:1476px;top:444px;width:99px"></div>
<div class="hb" style="left:1576px;top:444px;width:99px"></div>
<div class="hb" style="left:1676px;top:444px;width:100px"></div>
<div class="hb" style="left:1777px;top:444px;width:102px"></div>
<div class="cell n13 num" style="left:145px;width:59px;text-align:center;top:423px">7</div>
<div class="hb" style="left:146px;top:476px;width:58px"></div>
<div class="hb" style="left:205px;top:476px;width:47px"></div>
<div class="hb" style="left:253px;top:476px;width:99px"></div>
<div class="hb" style="left:353px;top:476px;width:148px"></div>
<div class="hb" style="left:502px;top:476px;width:110px"></div>
<div class="hb" style="left:613px;top:476px;width:99px"></div>
<div class="hb" style="left:713px;top:476px;width:76px"></div>
<div class="hb" style="left:790px;top:476px;width:99px"></div>
<div class="hb" style="left:890px;top:476px;width:99px"></div>
<div class="hb" style="left:990px;top:476px;width:99px"></div>
<div class="hb" style="left:1090px;top:476px;width:99px"></div>
<div class="hb" style="left:1190px;top:476px;width:85px"></div>
<div class="hb" style="left:1276px;top:476px;width:99px"></div>
<div class="hb" style="left:1376px;top:476px;width:99px"></div>
<div class="hb" style="left:1476px;top:476px;width:99px"></div>
<div class="hb" style="left:1576px;top:476px;width:99px"></div>
<div class="hb" style="left:1676px;top:476px;width:100px"></div>
<div class="hb" style="left:1777px;top:476px;width:102px"></div>
<div class="cell n13 num" style="left:145px;width:59px;text-align:center;top:455px">8</div>
<div class="cb" style="left:222px;top:453px"></div>
<div class="cell n13 num" style="left:266px;top:455px">2022-08-21</div>
<div class="cell" style="left:366px;top:455px;text-decoration:underline;font-size:12.7px">SA-20220821-004</div>
<div class="cell" style="left:515px;top:455px">上海先浦有限...</div>
<div class="cell" style="left:626px;top:455px">电脑</div>
<div class="cell" style="left:803px;top:455px">不开票</div>
<div class="cell" style="left:903px;top:455px">现结</div>
<div class="cell" style="left:1003px;top:455px">电脑</div>
<div class="cell num" style="right:743px;top:455px;font-size:12.5px">26,850.00</div>
<div class="badge bg1" style="left:1389px;top:452px">已生效</div>
<div class="badge bg1" style="left:1489px;top:452px">已收款</div>
<div class="abs" style="left:1589px;top:454.5px;line-height:0"><svg width="16" height="14" viewBox="0 0 16 14" fill="none" stroke="#777" stroke-width="1" stroke-linejoin="round"><path d="M1 10.5V1.8C1 1.2 1.3 0.8 2 0.8H9.8C10.4 0.8 10.7 1.2 10.7 1.8V4.2L13.6 6.2V10.5M4.8 11.2H9.6M3.6 5.6L5.2 7.2L7.6 4.6"/><circle cx="3.2" cy="11.2" r="1.35"/><circle cx="11.2" cy="11.2" r="1.35"/></svg></div>
<div class="cell" style="left:1605px;top:455px;color:#333">已出库</div>
<div class="abs" style="left:1807px;top:456px;line-height:0"><svg width="16" height="14" viewBox="0 0 16 14" fill="none" stroke="#6e6e6e" stroke-width="1.05" stroke-linecap="round"><path d="M7.6 11.8H2.2C1.6 11.8 1.1 11.3 1.1 10.7V2.2C1.1 1.6 1.6 1.1 2.2 1.1H10.6C11.2 1.1 11.7 1.6 11.7 2.2V5.6M3.6 4.5H9M3.6 6.6H6.4M3.6 9.4H5"/><circle cx="11" cy="9.1" r="2.5"/><path d="M12.9 11L14.4 12.6"/></svg></div>
<div class="abs" style="left:1837px;top:456px;line-height:0"><svg width="12" height="13" viewBox="0 0 12 13" fill="none" stroke="#5c5c5c" stroke-width="1.2"><rect x="1" y="1.2" width="3.6" height="4.4" rx="1.8"/><rect x="7" y="1.2" width="3.6" height="4.4" rx="1.8"/><rect x="1" y="7.4" width="3.6" height="4.4" rx="1.8"/><rect x="7" y="7.4" width="3.6" height="4.4" rx="1.8"/></svg></div>
<div class="hb" style="left:146px;top:508px;width:58px"></div>
<div class="hb" style="left:205px;top:508px;width:47px"></div>
<div class="hb" style="left:253px;top:508px;width:99px"></div>
<div class="hb" style="left:353px;top:508px;width:148px"></div>
<div class="hb" style="left:502px;top:508px;width:110px"></div>
<div class="hb" style="left:613px;top:508px;width:99px"></div>
<div class="hb" style="left:713px;top:508px;width:76px"></div>
<div class="hb" style="left:790px;top:508px;width:99px"></div>
<div class="hb" style="left:890px;top:508px;width:99px"></div>
<div class="hb" style="left:990px;top:508px;width:99px"></div>
<div class="hb" style="left:1090px;top:508px;width:99px"></div>
<div class="hb" style="left:1190px;top:508px;width:85px"></div>
<div class="hb" style="left:1276px;top:508px;width:99px"></div>
<div class="hb" style="left:1376px;top:508px;width:99px"></div>
<div class="hb" style="left:1476px;top:508px;width:99px"></div>
<div class="hb" style="left:1576px;top:508px;width:99px"></div>
<div class="hb" style="left:1676px;top:508px;width:100px"></div>
<div class="hb" style="left:1777px;top:508px;width:102px"></div>
<div class="cell n13 num" style="left:145px;width:59px;text-align:center;top:487px">9</div>
<div class="cb" style="left:222px;top:485px"></div>
<div class="cell n13 num" style="left:266px;top:487px">2022-08-22</div>
<div class="cell" style="left:366px;top:487px;text-decoration:underline;font-size:12.7px">SA-20220822-006</div>
<div class="cell" style="left:515px;top:487px">上海先浦有限...</div>
<div class="cell" style="left:626px;top:487px">电脑</div>
<div class="cell" style="left:803px;top:487px">不开票</div>
<div class="cell" style="left:903px;top:487px">现结</div>
<div class="cell" style="left:1003px;top:487px">电脑</div>
<div class="cell num" style="right:657px;top:487px;font-size:12.5px">44,750.00</div>
<div class="badge bg1" style="left:1389px;top:484px">已生效</div>
<div class="badge bg2" style="left:1489px;top:484px">未收款</div>
<div class="abs" style="left:1589px;top:486.5px;line-height:0"><svg width="16" height="14" viewBox="0 0 16 14" fill="none" stroke="#777" stroke-width="1" stroke-linejoin="round"><path d="M1 10.5V1.8C1 1.2 1.3 0.8 2 0.8H9.8C10.4 0.8 10.7 1.2 10.7 1.8V4.2L13.6 6.2V10.5M4.8 11.2H9.6M3.6 5.6L5.2 7.2L7.6 4.6"/><circle cx="3.2" cy="11.2" r="1.35"/><circle cx="11.2" cy="11.2" r="1.35"/></svg></div>
<div class="cell" style="left:1605px;top:487px;color:#333">已出库</div>
<div class="abs" style="left:1807px;top:488px;line-height:0"><svg width="16" height="14" viewBox="0 0 16 14" fill="none" stroke="#6e6e6e" stroke-width="1.05" stroke-linecap="round"><path d="M7.6 11.8H2.2C1.6 11.8 1.1 11.3 1.1 10.7V2.2C1.1 1.6 1.6 1.1 2.2 1.1H10.6C11.2 1.1 11.7 1.6 11.7 2.2V5.6M3.6 4.5H9M3.6 6.6H6.4M3.6 9.4H5"/><circle cx="11" cy="9.1" r="2.5"/><path d="M12.9 11L14.4 12.6"/></svg></div>
<div class="abs" style="left:1837px;top:488px;line-height:0"><svg width="12" height="13" viewBox="0 0 12 13" fill="none" stroke="#5c5c5c" stroke-width="1.2"><rect x="1" y="1.2" width="3.6" height="4.4" rx="1.8"/><rect x="7" y="1.2" width="3.6" height="4.4" rx="1.8"/><rect x="1" y="7.4" width="3.6" height="4.4" rx="1.8"/><rect x="7" y="7.4" width="3.6" height="4.4" rx="1.8"/></svg></div>
<div class="hb" style="left:146px;top:540px;width:58px"></div>
<div class="hb" style="left:205px;top:540px;width:47px"></div>
<div class="hb" style="left:253px;top:540px;width:99px"></div>
<div class="hb" style="left:353px;top:540px;width:148px"></div>
<div class="hb" style="left:502px;top:540px;width:110px"></div>
<div class="hb" style="left:613px;top:540px;width:99px"></div>
<div class="hb" style="left:713px;top:540px;width:76px"></div>
<div class="hb" style="left:790px;top:540px;width:99px"></div>
<div class="hb" style="left:890px;top:540px;width:99px"></div>
<div class="hb" style="left:990px;top:540px;width:99px"></div>
<div class="hb" style="left:1090px;top:540px;width:99px"></div>
<div class="hb" style="left:1190px;top:540px;width:85px"></div>
<div class="hb" style="left:1276px;top:540px;width:99px"></div>
<div class="hb" style="left:1376px;top:540px;width:99px"></div>
<div class="hb" style="left:1476px;top:540px;width:99px"></div>
<div class="hb" style="left:1576px;top:540px;width:99px"></div>
<div class="hb" style="left:1676px;top:540px;width:100px"></div>
<div class="hb" style="left:1777px;top:540px;width:102px"></div>
<div class="cell n13 num" style="left:145px;width:59px;text-align:center;top:519px">10</div>
<div class="cb" style="left:222px;top:517px"></div>
<div class="cell n13 num" style="left:266px;top:519px">2022-08-22</div>
<div class="cell" style="left:366px;top:519px;text-decoration:underline;font-size:12.7px">SA-20220822-007</div>
<div class="cell" style="left:515px;top:519px">上海爱枫有限...</div>
<div class="cell" style="left:626px;top:519px">电脑</div>
<div class="cell" style="left:803px;top:519px">增值税专用发票</div>
<div class="cell" style="left:903px;top:519px">现结</div>
<div class="cell" style="left:1003px;top:519px">电脑</div>
<div class="cell num" style="right:743px;top:519px;font-size:12.5px">35,000.00</div>
<div class="badge bg1" style="left:1389px;top:516px">已生效</div>
<div class="badge bg1" style="left:1489px;top:516px">已收款</div>
<div class="abs" style="left:1589px;top:518.5px;line-height:0"><svg width="16" height="14" viewBox="0 0 16 14" fill="none" stroke="#777" stroke-width="1" stroke-linejoin="round"><path d="M1 10.5V1.8C1 1.2 1.3 0.8 2 0.8H9.8C10.4 0.8 10.7 1.2 10.7 1.8V4.2L13.6 6.2V10.5M4.8 11.2H9.6M3.6 5.6L5.2 7.2L7.6 4.6"/><circle cx="3.2" cy="11.2" r="1.35"/><circle cx="11.2" cy="11.2" r="1.35"/></svg></div>
<div class="cell" style="left:1605px;top:519px;color:#333">已出库</div>
<div class="abs" style="left:1807px;top:520px;line-height:0"><svg width="16" height="14" viewBox="0 0 16 14" fill="none" stroke="#6e6e6e" stroke-width="1.05" stroke-linecap="round"><path d="M7.6 11.8H2.2C1.6 11.8 1.1 11.3 1.1 10.7V2.2C1.1 1.6 1.6 1.1 2.2 1.1H10.6C11.2 1.1 11.7 1.6 11.7 2.2V5.6M3.6 4.5H9M3.6 6.6H6.4M3.6 9.4H5"/><circle cx="11" cy="9.1" r="2.5"/><path d="M12.9 11L14.4 12.6"/></svg></div>
<div class="abs" style="left:1837px;top:520px;line-height:0"><svg width="12" height="13" viewBox="0 0 12 13" fill="none" stroke="#5c5c5c" stroke-width="1.2"><rect x="1" y="1.2" width="3.6" height="4.4" rx="1.8"/><rect x="7" y="1.2" width="3.6" height="4.4" rx="1.8"/><rect x="1" y="7.4" width="3.6" height="4.4" rx="1.8"/><rect x="7" y="7.4" width="3.6" height="4.4" rx="1.8"/></svg></div>
<div class="hb" style="left:146px;top:572px;width:58px"></div>
<div class="hb" style="left:205px;top:572px;width:47px"></div>
<div class="hb" style="left:253px;top:572px;width:99px"></div>
<div class="hb" style="left:353px;top:572px;width:148px"></div>
<div class="hb" style="left:502px;top:572px;width:110px"></div>
<div class="hb" style="left:613px;top:572px;width:99px"></div>
<div class="hb" style="left:713px;top:572px;width:76px"></div>
<div class="hb" style="left:790px;top:572px;width:99px"></div>
<div class="hb" style="left:890px;top:572px;width:99px"></div>
<div class="hb" style="left:990px;top:572px;width:99px"></div>
<div class="hb" style="left:1090px;top:572px;width:99px"></div>
<div class="hb" style="left:1190px;top:572px;width:85px"></div>
<div class="hb" style="left:1276px;top:572px;width:99px"></div>
<div class="hb" style="left:1376px;top:572px;width:99px"></div>
<div class="hb" style="left:1476px;top:572px;width:99px"></div>
<div class="hb" style="left:1576px;top:572px;width:99px"></div>
<div class="hb" style="left:1676px;top:572px;width:100px"></div>
<div class="hb" style="left:1777px;top:572px;width:102px"></div>
<div class="cell n13 num" style="left:145px;width:59px;text-align:center;top:551px">11</div>
<div class="cb" style="left:222px;top:549px"></div>
<div class="cell n13 num" style="left:266px;top:551px">2022-08-22</div>
<div class="cell" style="left:366px;top:551px;text-decoration:underline;font-size:12.7px">SA-20220822-008</div>
<div class="cell" style="left:515px;top:551px">江西天佑有限...</div>
<div class="cell" style="left:626px;top:551px">电脑</div>
<div class="cell" style="left:803px;top:551px">不开票</div>
<div class="cell" style="left:903px;top:551px">现结</div>
<div class="cell" style="left:1003px;top:551px">电脑</div>
<div class="cell num" style="right:657px;top:551px;font-size:12.5px">50,000.00</div>
<div class="badge bg1" style="left:1389px;top:548px">已生效</div>
<div class="badge bg2" style="left:1489px;top:548px">未收款</div>
<div class="abs" style="left:1589px;top:550.5px;line-height:0"><svg width="16" height="14" viewBox="0 0 16 14" fill="none" stroke="#777" stroke-width="1" stroke-linejoin="round"><path d="M1 10.5V1.8C1 1.2 1.3 0.8 2 0.8H9.8C10.4 0.8 10.7 1.2 10.7 1.8V4.2L13.6 6.2V10.5M4.8 11.2H9.6M3.6 5.6L5.2 7.2L7.6 4.6"/><circle cx="3.2" cy="11.2" r="1.35"/><circle cx="11.2" cy="11.2" r="1.35"/></svg></div>
<div class="cell" style="left:1605px;top:551px;color:#333">已出库</div>
<div class="abs" style="left:1807px;top:552px;line-height:0"><svg width="16" height="14" viewBox="0 0 16 14" fill="none" stroke="#6e6e6e" stroke-width="1.05" stroke-linecap="round"><path d="M7.6 11.8H2.2C1.6 11.8 1.1 11.3 1.1 10.7V2.2C1.1 1.6 1.6 1.1 2.2 1.1H10.6C11.2 1.1 11.7 1.6 11.7 2.2V5.6M3.6 4.5H9M3.6 6.6H6.4M3.6 9.4H5"/><circle cx="11" cy="9.1" r="2.5"/><path d="M12.9 11L14.4 12.6"/></svg></div>
<div class="abs" style="left:1837px;top:552px;line-height:0"><svg width="12" height="13" viewBox="0 0 12 13" fill="none" stroke="#5c5c5c" stroke-width="1.2"><rect x="1" y="1.2" width="3.6" height="4.4" rx="1.8"/><rect x="7" y="1.2" width="3.6" height="4.4" rx="1.8"/><rect x="1" y="7.4" width="3.6" height="4.4" rx="1.8"/><rect x="7" y="7.4" width="3.6" height="4.4" rx="1.8"/></svg></div>
<div class="hb" style="left:146px;top:604px;width:58px"></div>
<div class="hb" style="left:205px;top:604px;width:47px"></div>
<div class="hb" style="left:253px;top:604px;width:99px"></div>
<div class="hb" style="left:353px;top:604px;width:148px"></div>
<div class="hb" style="left:502px;top:604px;width:110px"></div>
<div class="hb" style="left:613px;top:604px;width:99px"></div>
<div class="hb" style="left:713px;top:604px;width:76px"></div>
<div class="hb" style="left:790px;top:604px;width:99px"></div>
<div class="hb" style="left:890px;top:604px;width:99px"></div>
<div class="hb" style="left:990px;top:604px;width:99px"></div>
<div class="hb" style="left:1090px;top:604px;width:99px"></div>
<div class="hb" style="left:1190px;top:604px;width:85px"></div>
<div class="hb" style="left:1276px;top:604px;width:99px"></div>
<div class="hb" style="left:1376px;top:604px;width:99px"></div>
<div class="hb" style="left:1476px;top:604px;width:99px"></div>
<div class="hb" style="left:1576px;top:604px;width:99px"></div>
<div class="hb" style="left:1676px;top:604px;width:100px"></div>
<div class="hb" style="left:1777px;top:604px;width:102px"></div>
<div class="cell n13 num" style="left:145px;width:59px;text-align:center;top:583px">12</div>
<div class="cb" style="left:222px;top:581px"></div>
<div class="cell n13 num" style="left:266px;top:583px">2022-08-22</div>
<div class="cell" style="left:366px;top:583px;text-decoration:underline;font-size:12.7px">SA-20220822-009</div>
<div class="cell" style="left:515px;top:583px">江西工贸有限...</div>
<div class="cell" style="left:626px;top:583px">电脑</div>
<div class="cell" style="left:803px;top:583px">不开票</div>
<div class="cell" style="left:903px;top:583px">现结</div>
<div class="cell" style="left:1003px;top:583px">电脑</div>
<div class="cell num" style="right:657px;top:583px;font-size:12.5px">14,000.00</div>
<div class="badge bg1" style="left:1389px;top:580px">已生效</div>
<div class="badge bg2" style="left:1489px;top:580px">未收款</div>
<div class="abs" style="left:1589px;top:582.5px;line-height:0"><svg width="16" height="14" viewBox="0 0 16 14" fill="none" stroke="#777" stroke-width="1" stroke-linejoin="round"><path d="M1 10.5V1.8C1 1.2 1.3 0.8 2 0.8H9.8C10.4 0.8 10.7 1.2 10.7 1.8V4.2L13.6 6.2V10.5M4.8 11.2H9.6M3.6 5.6L5.2 7.2L7.6 4.6"/><circle cx="3.2" cy="11.2" r="1.35"/><circle cx="11.2" cy="11.2" r="1.35"/></svg></div>
<div class="cell" style="left:1605px;top:583px;color:#333">已出库</div>
<div class="abs" style="left:1807px;top:584px;line-height:0"><svg width="16" height="14" viewBox="0 0 16 14" fill="none" stroke="#6e6e6e" stroke-width="1.05" stroke-linecap="round"><path d="M7.6 11.8H2.2C1.6 11.8 1.1 11.3 1.1 10.7V2.2C1.1 1.6 1.6 1.1 2.2 1.1H10.6C11.2 1.1 11.7 1.6 11.7 2.2V5.6M3.6 4.5H9M3.6 6.6H6.4M3.6 9.4H5"/><circle cx="11" cy="9.1" r="2.5"/><path d="M12.9 11L14.4 12.6"/></svg></div>
<div class="abs" style="left:1837px;top:584px;line-height:0"><svg width="12" height="13" viewBox="0 0 12 13" fill="none" stroke="#5c5c5c" stroke-width="1.2"><rect x="1" y="1.2" width="3.6" height="4.4" rx="1.8"/><rect x="7" y="1.2" width="3.6" height="4.4" rx="1.8"/><rect x="1" y="7.4" width="3.6" height="4.4" rx="1.8"/><rect x="7" y="7.4" width="3.6" height="4.4" rx="1.8"/></svg></div>
<div class="hb" style="left:146px;top:636px;width:58px"></div>
<div class="hb" style="left:205px;top:636px;width:47px"></div>
<div class="hb" style="left:253px;top:636px;width:99px"></div>
<div class="hb" style="left:353px;top:636px;width:148px"></div>
<div class="hb" style="left:502px;top:636px;width:110px"></div>
<div class="hb" style="left:613px;top:636px;width:99px"></div>
<div class="hb" style="left:713px;top:636px;width:76px"></div>
<div class="hb" style="left:790px;top:636px;width:99px"></div>
<div class="hb" style="left:890px;top:636px;width:99px"></div>
<div class="hb" style="left:990px;top:636px;width:99px"></div>
<div class="hb" style="left:1090px;top:636px;width:99px"></div>
<div class="hb" style="left:1190px;top:636px;width:85px"></div>
<div class="hb" style="left:1276px;top:636px;width:99px"></div>
<div class="hb" style="left:1376px;top:636px;width:99px"></div>
<div class="hb" style="left:1476px;top:636px;width:99px"></div>
<div class="hb" style="left:1576px;top:636px;width:99px"></div>
<div class="hb" style="left:1676px;top:636px;width:100px"></div>
<div class="hb" style="left:1777px;top:636px;width:102px"></div>
<div class="cell n13 num" style="left:145px;width:59px;text-align:center;top:615px">13</div>
<div class="cb" style="left:222px;top:613px"></div>
<div class="cell n13 num" style="left:266px;top:615px">2022-08-22</div>
<div class="cell" style="left:366px;top:615px;text-decoration:underline;font-size:12.7px">SA-20220822-010</div>
<div class="cell" style="left:515px;top:615px">江西天佑有限...</div>
<div class="cell" style="left:626px;top:615px">电脑</div>
<div class="cell" style="left:803px;top:615px">不开票</div>
<div class="cell" style="left:903px;top:615px">现结</div>
<div class="cell" style="left:1003px;top:615px">电脑</div>
<div class="cell num" style="right:743px;top:615px;font-size:12.5px">828.00</div>
<div class="badge bg1" style="left:1389px;top:612px">已生效</div>
<div class="badge bg1" style="left:1489px;top:612px">已收款</div>
<div class="abs" style="left:1589px;top:614.5px;line-height:0"><svg width="16" height="14" viewBox="0 0 16 14" fill="none" stroke="#777" stroke-width="1" stroke-linejoin="round"><path d="M1 10.5V1.8C1 1.2 1.3 0.8 2 0.8H9.8C10.4 0.8 10.7 1.2 10.7 1.8V4.2L13.6 6.2V10.5M4.8 11.2H9.6M3.6 5.6L5.2 7.2L7.6 4.6"/><circle cx="3.2" cy="11.2" r="1.35"/><circle cx="11.2" cy="11.2" r="1.35"/></svg></div>
<div class="cell" style="left:1605px;top:615px;color:#333">已出库</div>
<div class="abs" style="left:1807px;top:616px;line-height:0"><svg width="16" height="14" viewBox="0 0 16 14" fill="none" stroke="#6e6e6e" stroke-width="1.05" stroke-linecap="round"><path d="M7.6 11.8H2.2C1.6 11.8 1.1 11.3 1.1 10.7V2.2C1.1 1.6 1.6 1.1 2.2 1.1H10.6C11.2 1.1 11.7 1.6 11.7 2.2V5.6M3.6 4.5H9M3.6 6.6H6.4M3.6 9.4H5"/><circle cx="11" cy="9.1" r="2.5"/><path d="M12.9 11L14.4 12.6"/></svg></div>
<div class="abs" style="left:1837px;top:616px;line-height:0"><svg width="12" height="13" viewBox="0 0 12 13" fill="none" stroke="#5c5c5c" stroke-width="1.2"><rect x="1" y="1.2" width="3.6" height="4.4" rx="1.8"/><rect x="7" y="1.2" width="3.6" height="4.4" rx="1.8"/><rect x="1" y="7.4" width="3.6" height="4.4" rx="1.8"/><rect x="7" y="7.4" width="3.6" height="4.4" rx="1.8"/></svg></div>
<div class="hb" style="left:146px;top:668px;width:58px"></div>
<div class="hb" style="left:205px;top:668px;width:47px"></div>
<div class="hb" style="left:253px;top:668px;width:99px"></div>
<div class="hb" style="left:353px;top:668px;width:148px"></div>
<div class="hb" style="left:502px;top:668px;width:110px"></div>
<div class="hb" style="left:613px;top:668px;width:99px"></div>
<div class="hb" style="left:713px;top:668px;width:76px"></div>
<div class="hb" style="left:790px;top:668px;width:99px"></div>
<div class="hb" style="left:890px;top:668px;width:99px"></div>
<div class="hb" style="left:990px;top:668px;width:99px"></div>
<div class="hb" style="left:1090px;top:668px;width:99px"></div>
<div class="hb" style="left:1190px;top:668px;width:85px"></div>
<div class="hb" style="left:1276px;top:668px;width:99px"></div>
<div class="hb" style="left:1376px;top:668px;width:99px"></div>
<div class="hb" style="left:1476px;top:668px;width:99px"></div>
<div class="hb" style="left:1576px;top:668px;width:99px"></div>
<div class="hb" style="left:1676px;top:668px;width:100px"></div>
<div class="hb" style="left:1777px;top:668px;width:102px"></div>
<div class="cell n13 num" style="left:145px;width:59px;text-align:center;top:647px">14</div>
<div class="cb" style="left:222px;top:645px"></div>
<div class="cell n13 num" style="left:266px;top:647px">2022-08-22</div>
<div class="cell" style="left:366px;top:647px;text-decoration:underline;font-size:12.7px">SA-20220822-011</div>
<div class="cell" style="left:515px;top:647px">上海日升集团</div>
<div class="cell" style="left:626px;top:647px">电脑</div>
<div class="cell" style="left:803px;top:647px">不开票</div>
<div class="cell" style="left:903px;top:647px">现结</div>
<div class="cell" style="left:1003px;top:647px">电脑</div>
<div class="cell num" style="right:743px;top:647px;font-size:12.5px">89,500.00</div>
<div class="badge bg1" style="left:1389px;top:644px">已生效</div>
<div class="badge bg1" style="left:1489px;top:644px">已收款</div>
<div class="abs" style="left:1589px;top:646.5px;line-height:0"><svg width="16" height="14" viewBox="0 0 16 14" fill="none" stroke="#777" stroke-width="1" stroke-linejoin="round"><path d="M1 10.5V1.8C1 1.2 1.3 0.8 2 0.8H9.8C10.4 0.8 10.7 1.2 10.7 1.8V4.2L13.6 6.2V10.5M4.8 11.2H9.6M3.6 5.6L5.2 7.2L7.6 4.6"/><circle cx="3.2" cy="11.2" r="1.35"/><circle cx="11.2" cy="11.2" r="1.35"/></svg></div>
<div class="cell" style="left:1605px;top:647px;color:#333">已出库</div>
<div class="abs" style="left:1807px;top:648px;line-height:0"><svg width="16" height="14" viewBox="0 0 16 14" fill="none" stroke="#6e6e6e" stroke-width="1.05" stroke-linecap="round"><path d="M7.6 11.8H2.2C1.6 11.8 1.1 11.3 1.1 10.7V2.2C1.1 1.6 1.6 1.1 2.2 1.1H10.6C11.2 1.1 11.7 1.6 11.7 2.2V5.6M3.6 4.5H9M3.6 6.6H6.4M3.6 9.4H5"/><circle cx="11" cy="9.1" r="2.5"/><path d="M12.9 11L14.4 12.6"/></svg></div>
<div class="abs" style="left:1837px;top:648px;line-height:0"><svg width="12" height="13" viewBox="0 0 12 13" fill="none" stroke="#5c5c5c" stroke-width="1.2"><rect x="1" y="1.2" width="3.6" height="4.4" rx="1.8"/><rect x="7" y="1.2" width="3.6" height="4.4" rx="1.8"/><rect x="1" y="7.4" width="3.6" height="4.4" rx="1.8"/><rect x="7" y="7.4" width="3.6" height="4.4" rx="1.8"/></svg></div>
<div class="hb" style="left:146px;top:700px;width:58px"></div>
<div class="hb" style="left:205px;top:700px;width:47px"></div>
<div class="hb" style="left:253px;top:700px;width:99px"></div>
<div class="hb" style="left:353px;top:700px;width:148px"></div>
<div class="hb" style="left:502px;top:700px;width:110px"></div>
<div class="hb" style="left:613px;top:700px;width:99px"></div>
<div class="hb" style="left:713px;top:700px;width:76px"></div>
<div class="hb" style="left:790px;top:700px;width:99px"></div>
<div class="hb" style="left:890px;top:700px;width:99px"></div>
<div class="hb" style="left:990px;top:700px;width:99px"></div>
<div class="hb" style="left:1090px;top:700px;width:99px"></div>
<div class="hb" style="left:1190px;top:700px;width:85px"></div>
<div class="hb" style="left:1276px;top:700px;width:99px"></div>
<div class="hb" style="left:1376px;top:700px;width:99px"></div>
<div class="hb" style="left:1476px;top:700px;width:99px"></div>
<div class="hb" style="left:1576px;top:700px;width:99px"></div>
<div class="hb" style="left:1676px;top:700px;width:100px"></div>
<div class="hb" style="left:1777px;top:700px;width:102px"></div>
<div class="cell n13 num" style="left:145px;width:59px;text-align:center;top:679px">15</div>
<div class="cb" style="left:222px;top:677px"></div>
<div class="cell n13 num" style="left:266px;top:679px">2022-08-22</div>
<div class="cell" style="left:366px;top:679px;text-decoration:underline;font-size:12.7px">SA-20220822-014</div>
<div class="cell" style="left:515px;top:679px">上海宝力有限...</div>
<div class="cell" style="left:626px;top:679px">电脑</div>
<div class="cell" style="left:803px;top:679px">增值税专用发票</div>
<div class="cell" style="left:903px;top:679px">现结</div>
<div class="cell" style="left:1003px;top:679px">电脑</div>
<div class="cell num" style="right:743px;top:679px;font-size:12.5px">187,000.00</div>
<div class="badge bg1" style="left:1389px;top:676px">已生效</div>
<div class="badge bg1" style="left:1489px;top:676px">已收款</div>
<div class="abs" style="left:1589px;top:678.5px;line-height:0"><svg width="16" height="14" viewBox="0 0 16 14" fill="none" stroke="#777" stroke-width="1" stroke-linejoin="round"><path d="M1 10.5V1.8C1 1.2 1.3 0.8 2 0.8H9.8C10.4 0.8 10.7 1.2 10.7 1.8V4.2L13.6 6.2V10.5M4.8 11.2H9.6M3.6 5.6L5.2 7.2L7.6 4.6"/><circle cx="3.2" cy="11.2" r="1.35"/><circle cx="11.2" cy="11.2" r="1.35"/></svg></div>
<div class="cell" style="left:1605px;top:679px;color:#333">已出库</div>
<div class="abs" style="left:1807px;top:680px;line-height:0"><svg width="16" height="14" viewBox="0 0 16 14" fill="none" stroke="#6e6e6e" stroke-width="1.05" stroke-linecap="round"><path d="M7.6 11.8H2.2C1.6 11.8 1.1 11.3 1.1 10.7V2.2C1.1 1.6 1.6 1.1 2.2 1.1H10.6C11.2 1.1 11.7 1.6 11.7 2.2V5.6M3.6 4.5H9M3.6 6.6H6.4M3.6 9.4H5"/><circle cx="11" cy="9.1" r="2.5"/><path d="M12.9 11L14.4 12.6"/></svg></div>
<div class="abs" style="left:1837px;top:680px;line-height:0"><svg width="12" height="13" viewBox="0 0 12 13" fill="none" stroke="#5c5c5c" stroke-width="1.2"><rect x="1" y="1.2" width="3.6" height="4.4" rx="1.8"/><rect x="7" y="1.2" width="3.6" height="4.4" rx="1.8"/><rect x="1" y="7.4" width="3.6" height="4.4" rx="1.8"/><rect x="7" y="7.4" width="3.6" height="4.4" rx="1.8"/></svg></div>
<div class="abs" style="left:1769px;top:221px;width:10px;height:478px;background:linear-gradient(to right,rgba(0,0,0,0),rgba(0,0,0,0.05))"></div>
<div class="abs" style="left:145px;top:699px;width:1734px;height:1px;background:#dcdcdc"></div>
<div class="abs" style="left:145px;top:700px;width:1734px;height:31px;background:#fcf0db"></div>
<div class="abs" style="left:145px;top:731px;width:1734px;height:2px;background:#dedede"></div>
<div class="abs" style="left:252px;top:700px;width:1px;height:38px;background:#d6d6d6"></div>
<div class="abs" style="left:1779px;top:733px;width:1px;height:5px;background:#d6d6d6"></div>
<div class="cell" style="left:160px;top:709px">合计:</div>
<div class="abs" style="left:1870px;top:223px;width:9px;height:142px;border-radius:5px;background:rgba(0,0,0,0.3)"></div>
<div class="abs" style="left:256px;top:736px;width:864px;height:9px;border-radius:5px;background:rgba(0,0,0,0.3)"></div>
</body></html>
